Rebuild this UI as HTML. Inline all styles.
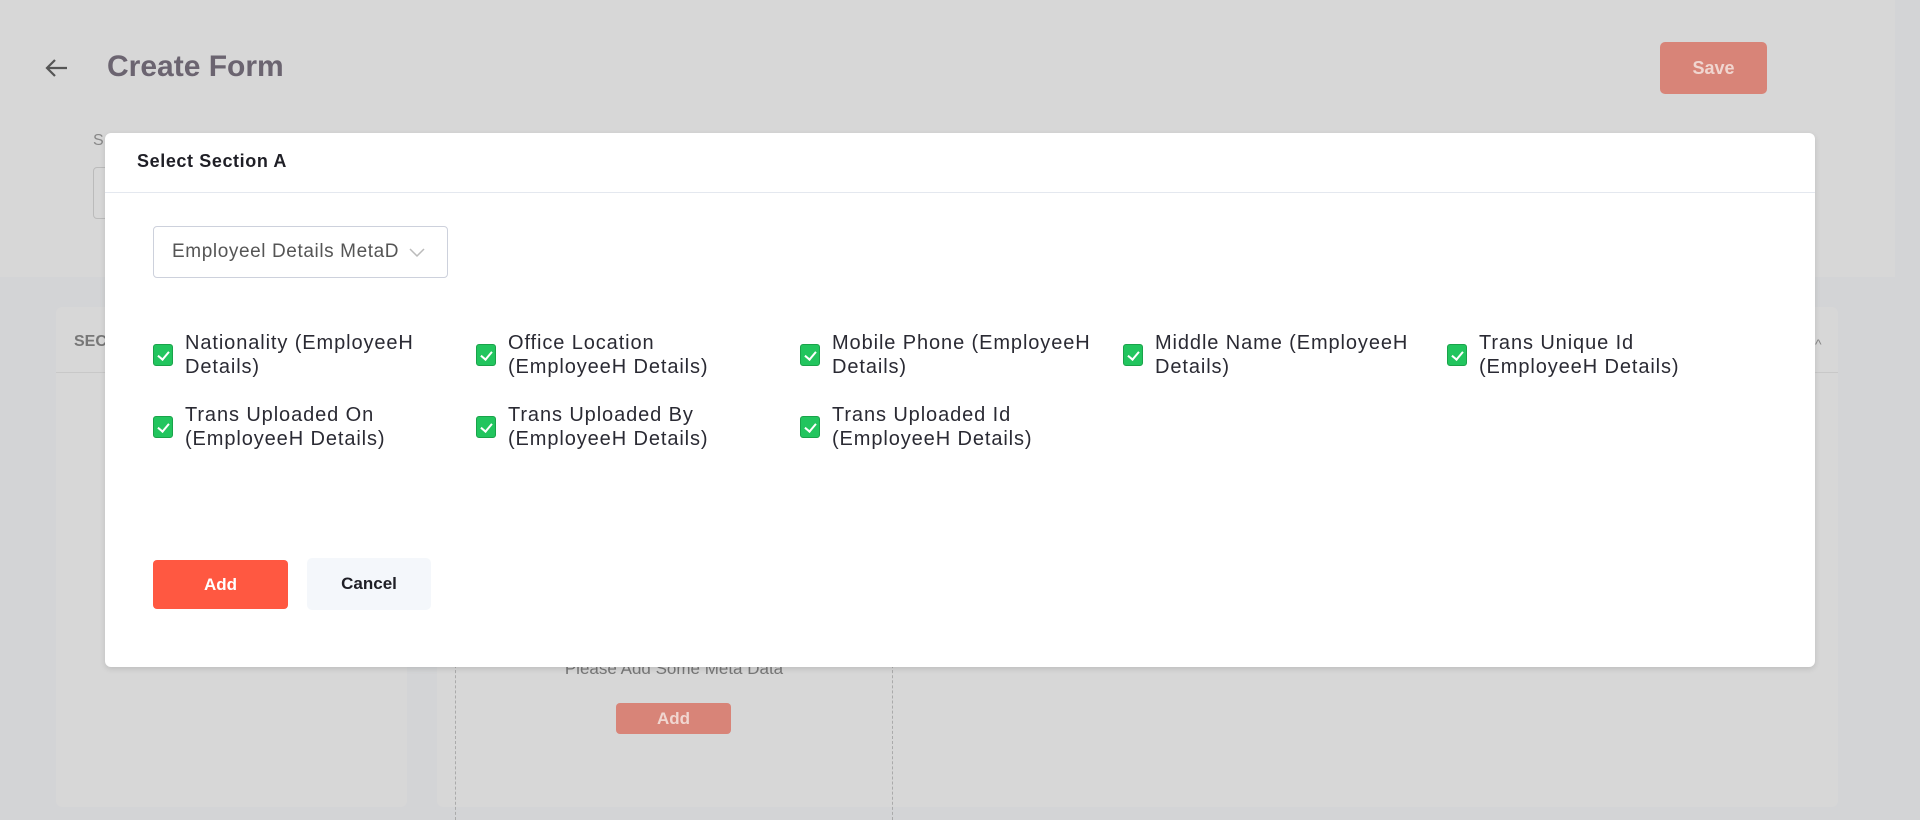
<!DOCTYPE html>
<html><head><style>
*{box-sizing:border-box;margin:0;padding:0}
body{width:1920px;height:800px;overflow:hidden;background:#d3d4d6;font-family:"Liberation Sans",Arial,sans-serif;position:relative}
.top{position:absolute;left:0;top:0;width:1895px;height:277px;background:#d7d7d7}
.abs{position:absolute}
.card{background:#d7d7d7;border-radius:6px}
.modal{position:absolute;left:105px;top:133px;width:1710px;height:534px;background:#fff;border-radius:6px;box-shadow:0 2px 6px rgba(0,0,0,.12)}
.cb{position:absolute;width:20px;height:22px;background:#22c55e;border-radius:3px;border:1px solid #1aa34a}
.cb::after{content:"";position:absolute;left:6px;top:4px;width:5px;height:9px;border:solid #fff;border-width:0 2px 2px 0;transform:rotate(40deg)}
.lbl{position:absolute;font-size:20px;letter-spacing:0.9px;line-height:24px;color:#2a2a33;white-space:nowrap}
</style></head><body>
<div class="top"></div>
<svg class="abs" style="left:45px;top:58px" width="24" height="20" viewBox="0 0 24 20"><path d="M22 10H3M10 2L2 10l8 8" stroke="#555" stroke-width="2.2" fill="none"/></svg>
<div class="abs" style="left:107px;top:50px;font-size:30px;font-weight:bold;color:#6b6470">Create Form</div>
<div class="abs" style="left:1660px;top:42px;width:107px;height:52px;background:#d88478;border-radius:5px;color:#f0d6d0;font-weight:bold;font-size:18px;line-height:52px;text-align:center">Save</div>
<div class="abs" style="left:93px;top:132px;font-size:16px;color:#888">S</div>
<div class="abs" style="left:93px;top:167px;width:20px;height:52px;border:1px solid #bbb;border-radius:4px"></div>
<div class="abs card" style="left:56px;top:307px;width:351px;height:500px"></div>
<div class="abs" style="left:56px;top:372px;width:351px;height:1px;background:#c8c8c8"></div>
<div class="abs" style="left:74px;top:333px;font-size:16px;font-weight:bold;color:#777">SEC</div>
<div class="abs card" style="left:437px;top:307px;width:1401px;height:500px"></div>
<div class="abs" style="left:437px;top:372px;width:1401px;height:1px;background:#c8c8c8"></div>
<div class="abs" style="left:1815px;top:336px;font-size:14px;color:#888">^</div>
<div class="abs" style="left:455px;top:660px;width:438px;height:160px;border-left:1px dashed #aaa;border-right:1px dashed #aaa"></div>
<div class="abs" style="left:455px;top:659px;width:438px;text-align:center;font-size:17px;color:#777">Please Add Some Meta Data</div>
<div class="abs" style="left:616px;top:703px;width:115px;height:31px;background:#d88478;border-radius:4px;color:#f0d6d0;font-weight:bold;font-size:17px;line-height:31px;text-align:center">Add</div>

<div class="modal">
<div class="abs" style="left:32px;top:18px;font-size:18px;letter-spacing:0.6px;font-weight:bold;color:#1f1f26">Select Section A</div>
<div class="abs" style="left:0;top:59px;width:1710px;height:1px;background:#e4e8ef"></div>
<div class="abs" style="left:48px;top:93px;width:295px;height:52px;border:1px solid #cdd1dc;border-radius:4px;font-size:19px;letter-spacing:0.6px;color:#555;line-height:50px;padding-left:18px;white-space:nowrap">Employeel Details MetaD<svg style="position:absolute;left:255px;top:20px" width="16" height="12" viewBox="0 0 16 12"><path d="M1 2l7 7 7-7" stroke="#bbb" stroke-width="1.5" fill="none"/></svg></div>

<div class="cb" style="left:48px;top:211px"></div><div class="lbl" style="left:80px;top:198px">Nationality (EmployeeH<br>Details)</div>
<div class="cb" style="left:371px;top:211px"></div><div class="lbl" style="left:403px;top:198px">Office Location<br>(EmployeeH Details)</div>
<div class="cb" style="left:695px;top:211px"></div><div class="lbl" style="left:727px;top:198px">Mobile Phone (EmployeeH<br>Details)</div>
<div class="cb" style="left:1018px;top:211px"></div><div class="lbl" style="left:1050px;top:198px">Middle Name (EmployeeH<br>Details)</div>
<div class="cb" style="left:1342px;top:211px"></div><div class="lbl" style="left:1374px;top:198px">Trans Unique Id<br>(EmployeeH Details)</div>
<div class="cb" style="left:48px;top:283px"></div><div class="lbl" style="left:80px;top:270px">Trans Uploaded On<br>(EmployeeH Details)</div>
<div class="cb" style="left:371px;top:283px"></div><div class="lbl" style="left:403px;top:270px">Trans Uploaded By<br>(EmployeeH Details)</div>
<div class="cb" style="left:695px;top:283px"></div><div class="lbl" style="left:727px;top:270px">Trans Uploaded Id<br>(EmployeeH Details)</div>

<div class="abs" style="left:48px;top:427px;width:135px;height:49px;background:#ff5841;border-radius:4px;color:#fff;font-weight:bold;font-size:17px;line-height:49px;text-align:center">Add</div>
<div class="abs" style="left:202px;top:425px;width:124px;height:52px;background:#f4f7fb;border-radius:5px;color:#1f1f26;font-weight:bold;font-size:17px;line-height:52px;text-align:center">Cancel</div>
</div>
</body></html>
